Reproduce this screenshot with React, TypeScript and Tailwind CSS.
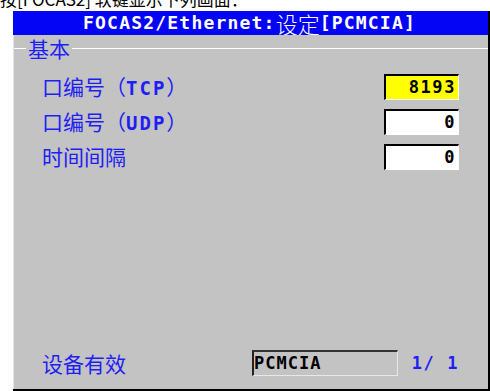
import React from "react";

const cjk = "font-['Noto_Sans_CJK_SC',sans-serif]";
const mono = "font-['DejaVu_Sans_Mono',monospace] font-bold";

const ValueBox = ({ value, hot }: { value: string; hot?: boolean }) => (
  <div
    className={`flex h-[26px] w-[75px] items-center justify-end border-t-2 border-l-2 border-r border-b border-t-black border-l-black border-r-white border-b-white pr-[2px] text-[17px] leading-none tracking-[1.6px] text-black ${mono} ${
      hot ? "bg-[#ffff00]" : "bg-white"
    }`}
  >
    {value}
  </div>
);

const ParamRow = ({ label, value, hot }: { label: React.ReactNode; value: string; hot?: boolean }) => (
  <div className="flex h-[35px] items-center justify-between pl-[28px] pr-[29px]">
    <div className={`text-[21px] leading-none text-[#1e1ef5] ${cjk}`}>{label}</div>
    <ValueBox value={value} hot={hot} />
  </div>
);

export default function App() {
  return (
    <div className="flex h-[391px] w-[490px] flex-col overflow-hidden bg-white">
      {/* caption above the screen, cut off by the crop */}
      <div className={`-mt-[10px] mb-[4px] whitespace-nowrap text-[17px] leading-[17px] text-black ${cjk}`}>
        按[FOCAS2] 软键显示下列画面：
      </div>

      <div className="ml-[13px] flex w-[477px] flex-1 flex-col border-r-2 border-b-2 border-black">
        {/* title bar */}
        <div className="flex h-[24px] items-center justify-center bg-[#0505f5] pr-[2px] text-white">
          <span className={`text-[18px] leading-none tracking-[1.2px] ${mono}`}>FOCAS2/Ethernet:</span>
          <span className={`text-[22px] font-light leading-none ${cjk}`}>设定</span>
          <span className={`text-[18px] leading-none tracking-[1.2px] ${mono}`}>[PCMCIA]</span>
        </div>

        <div className="flex flex-1 flex-col border-l border-[#e4e4e4] bg-[#c3c3c3]">
          {/* group heading */}
          <div className="flex h-[26px] items-center">
            <div className="h-px w-[12px] bg-white" />
            <span className={`px-[2px] text-[21px] leading-none text-[#1e1ef5] ${cjk}`}>基本</span>
            <div className="h-px flex-1 bg-white" />
          </div>

          <div className="mt-[8px] flex flex-col">
            <ParamRow
              label={
                <>
                  口编号（<span className={`text-[19px] tracking-[2px] ${mono}`}>TCP</span>）
                </>
              }
              value="8193"
              hot
            />
            <ParamRow
              label={
                <>
                  口编号（<span className={`text-[19px] tracking-[2px] ${mono}`}>UDP</span>）
                </>
              }
              value="0"
            />
            <ParamRow label="时间间隔" value="0" />
          </div>

          <div className="flex-1" />

          {/* status line */}
          <div className="mb-[9px] flex h-[34px] items-center pl-[28px] pr-[29px]">
            <span className={`w-[210px] text-[21px] leading-none text-[#1e1ef5] ${cjk}`}>设备有效</span>
            <div
              className={`flex h-[26px] w-[146px] items-center border-t-2 border-l-2 border-r border-b border-t-[#333] border-l-[#222] border-r-[#e8e8e8] border-b-[#e8e8e8] text-[17px] leading-none tracking-[1px] text-black ${mono}`}
            >
              PCMCIA
            </div>
            <span className={`ml-auto text-[17px] leading-none tracking-[1.6px] text-[#1e1ef5] ${mono}`}>1/ 1</span>
          </div>
        </div>
      </div>
    </div>
  );
}
